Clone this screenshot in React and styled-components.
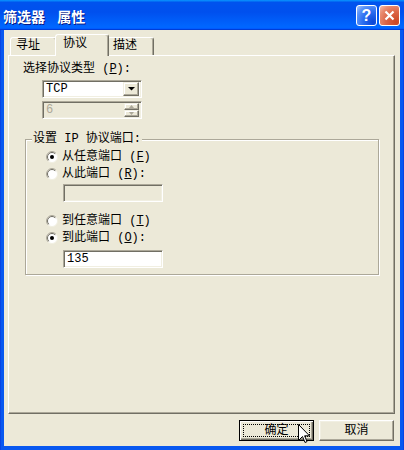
import React from 'react';
import styled, { createGlobalStyle } from 'styled-components';

const GlobalStyle = createGlobalStyle`
  html, body {
    margin: 0;
    padding: 0;
    background: #fff;
  }
  body {
    font-family: "Liberation Mono", "Noto Sans CJK SC", monospace;
    font-size: 12px;
    color: #000;
  }
`;

const Window = styled.div`
  width: 404px;
  height: 450px;
  box-sizing: border-box;
  display: flex;
  flex-direction: column;
  padding-bottom: 4px;
  background: linear-gradient(to right, #0831d9 0, #0858f0 1px, #0858f0 403px, #0831d9 404px);
`;

const TitleBar = styled.div`
  height: 30px;
  flex: none;
  display: flex;
  align-items: center;
  padding: 0 4px 0 3px;
  background: linear-gradient(180deg, #0997ff, #0053ee 8%, #0050ee 40%, #0066ff 88%, #0066ff 93%, #005bff 95%, #003dd7 96%, #003dd7);
`;

const Title = styled.div`
  flex: 1;
  color: #fff;
  font-family: "Noto Sans CJK SC", sans-serif;
  font-weight: bold;
  font-size: 14px;
  line-height: 16px;
  word-spacing: 9px;
  text-shadow: 1px 1px 0 #0a1883;
  margin-top: 1px;
`;

const Controls = styled.div`
  display: flex;
  gap: 2px;
  margin-top: 1px;
`;

const CaptionButton = styled.div`
  width: 21px;
  height: 21px;
  box-sizing: border-box;
  border: 1px solid #fff;
  border-radius: 3px;
  display: flex;
  align-items: center;
  justify-content: center;
  color: #fff;
  font-family: "Liberation Sans", sans-serif;
  font-weight: bold;
  font-size: 16px;
  background: ${({ kind }) =>
    kind === 'close'
      ? 'radial-gradient(circle at 85% 85%, #cc4623 0%, #dc6547 45%, #e88a6f 75%, #f4c0ae 100%)'
      : 'radial-gradient(circle at 85% 85%, #0a45d6 0%, #2a6df0 45%, #5b93f8 75%, #a9c6fb 100%)'};
`;

const Body = styled.div`
  flex: 1;
  margin: 0 4px;
  background: #ece9d8;
  display: flex;
  flex-direction: column;
  padding: 4px 5px 0 4px;
`;

const TabRow = styled.div`
  height: 21px;
  display: flex;
  align-items: flex-end;
  padding-left: 2px;
  position: relative;
  z-index: 1;
`;

const Tab = styled.div`
  box-sizing: border-box;
  width: ${({ w, active }) => (active ? w + 4 : w)}px;
  height: ${({ active }) => (active ? 22 : 18)}px;
  margin: ${({ active }) => (active ? '0 -2px -1px' : '0')};
  padding: ${({ active }) => (active ? '2px 0 0 7px' : '1px 0 0 5px')};
  position: relative;
  z-index: ${({ active }) => (active ? 2 : 1)};
  background: #ece9d8;
  border: 1px solid;
  border-bottom: none;
  border-color: #fff #716f64 transparent #fff;
  border-radius: 3px 3px 0 0;
  box-shadow: inset -1px 0 0 #aca899;
  line-height: 14px;
  white-space: nowrap;
`;

const Panel = styled.div`
  height: 359px;
  box-sizing: border-box;
  border: 1px solid;
  border-color: #fff #716f64 #716f64 #fff;
  box-shadow: inset -1px -1px 0 #aca899;
  padding: 6px 15px 0 14px;
  display: flex;
  flex-direction: column;
  align-items: flex-start;
`;

const Label = styled.div`
  line-height: 14px;
  height: 14px;
  white-space: nowrap;
`;

const Field = styled.div`
  box-sizing: border-box;
  width: 100px;
  height: 18px;
  margin: ${({ m }) => m || '0'};
  display: flex;
  align-items: center;
  padding: 2px;
  border: 1px solid;
  border-color: #aca899 #fff #fff #aca899;
  box-shadow: inset 1px 1px 0 #716f64, inset -1px -1px 0 #f1efe2;
  background: ${({ disabled }) => (disabled ? '#ece9d8' : '#fff')};
  color: ${({ disabled }) => (disabled ? '#aca899' : '#000')};
`;

const FieldText = styled.div`
  flex: 1;
  padding-left: 1px;
  line-height: 14px;
`;

const DropButton = styled.div`
  width: 16px;
  height: 14px;
  box-sizing: border-box;
  border: 1px solid;
  border-color: #f1efe2 #716f64 #716f64 #f1efe2;
  box-shadow: inset -1px -1px 0 #aca899, inset 1px 1px 0 #fff;
  background: #ece9d8;
  display: flex;
  align-items: center;
  justify-content: center;
`;

const SpinStack = styled.div`
  display: flex;
  flex-direction: column;
`;

const SpinButton = styled(DropButton)`
  width: 15px;
  height: 7px;
`;

const Group = styled.fieldset`
  margin: 13px 0 0 2px;
  padding: 0;
  min-inline-size: 0;
  width: 354px;
  box-sizing: border-box;
  border: 1px solid #aca899;
  box-shadow: 1px 1px 0 #fff, inset 1px 1px 0 #fff;
`;

const Legend = styled.legend`
  margin-left: 6px;
  padding: 0 1px;
  line-height: 14px;
  background: #ece9d8;
`;

const GroupBody = styled.div`
  padding: 3px 0 6px 20px;
  display: flex;
  flex-direction: column;
  align-items: flex-start;
`;

const RadioRow = styled.div`
  height: 16px;
  margin-top: ${({ gap }) => gap || 0}px;
  display: flex;
  align-items: center;
  gap: 4px;
  line-height: 14px;
  white-space: nowrap;
`;

const ButtonRow = styled.div`
  margin-top: 6px;
  padding-right: 1px;
  display: flex;
  justify-content: flex-end;
  gap: 5px;
  position: relative;
`;

const Button = styled.div`
  width: 75px;
  height: 21px;
  box-sizing: border-box;
  display: flex;
  align-items: center;
  justify-content: center;
  position: relative;
  background: #ece9d8;
  border: 1px solid;
  border-color: ${({ primary }) => (primary ? '#000' : '#fff #716f64 #716f64 #fff')};
  box-shadow: ${({ primary }) =>
    primary
      ? 'inset 1px 1px 0 #fff, inset -1px -1px 0 #716f64, inset -2px -2px 0 #aca899'
      : 'inset -1px -1px 0 #aca899, inset 1px 1px 0 #f1efe2'};
  line-height: 14px;

  &::after {
    content: '';
    display: ${({ primary }) => (primary ? 'block' : 'none')};
    position: absolute;
    inset: 3px;
    border: 1px dotted #000;
  }
`;

const Cursor = styled.svg`
  position: absolute;
  left: 290px;
  top: 4px;
  z-index: 3;
`;

const Radio = ({ checked }) => (
  <svg width="12" height="12" viewBox="0 0 12 12">
    <circle cx="6" cy="6" r="5.5" fill="#fff" stroke="#f1efe2" />
    <path d="M2.1 9.9 A5.5 5.5 0 0 1 9.9 2.1" fill="none" stroke="#aca899" />
    <path d="M2.8 9.2 A4.5 4.5 0 0 1 9.2 2.8" fill="none" stroke="#716f64" />
    {checked && <circle cx="6" cy="6" r="2" fill="#000" />}
  </svg>
);

const Arrow = ({ color = '#000', up }) => (
  <svg width="7" height="4" viewBox="0 0 7 4">
    <path d={up ? 'M0 4 L7 4 L3.5 0.5 Z' : 'M0 0 L7 0 L3.5 3.5 Z'} fill={color} />
  </svg>
);

const SmallArrow = ({ up }) => (
  <svg width="5" height="3" viewBox="0 0 5 3">
    <path d={up ? 'M0 3 L5 3 L2.5 0 Z' : 'M0 0 L5 0 L2.5 3 Z'} fill="#aca899" />
  </svg>
);

export default function App() {
  return (
    <>
      <GlobalStyle />
      <Window>
        <TitleBar>
          <Title>筛选器 属性</Title>
          <Controls>
            <CaptionButton kind="help">?</CaptionButton>
            <CaptionButton kind="close">
              <svg width="11" height="11" viewBox="0 0 11 11">
                <path d="M1.5 1.5 L9.5 9.5 M9.5 1.5 L1.5 9.5" stroke="#fff" strokeWidth="2.2" />
              </svg>
            </CaptionButton>
          </Controls>
        </TitleBar>
        <Body>
          <TabRow>
            <Tab w={47}>寻址</Tab>
            <Tab w={50} active>协议</Tab>
            <Tab w={47}>描述</Tab>
          </TabRow>
          <Panel>
            <Label>选择协议类型 (<u>P</u>):</Label>
            <Field m="4px 0 0 19px">
              <FieldText>TCP</FieldText>
              <DropButton>
                <Arrow />
              </DropButton>
            </Field>
            <Field m="3px 0 0 19px" disabled>
              <FieldText>6</FieldText>
              <SpinStack>
                <SpinButton>
                  <SmallArrow up />
                </SpinButton>
                <SpinButton>
                  <SmallArrow />
                </SpinButton>
              </SpinStack>
            </Field>
            <Group>
              <Legend>设置 IP 协议端口:</Legend>
              <GroupBody>
                <RadioRow>
                  <Radio checked />
                  <span>从任意端口 (<u>F</u>)</span>
                </RadioRow>
                <RadioRow gap={1}>
                  <Radio />
                  <span>从此端口 (<u>R</u>):</span>
                </RadioRow>
                <Field m="2px 0 0 17px" disabled />
                <RadioRow gap={11}>
                  <Radio />
                  <span>到任意端口 (<u>T</u>)</span>
                </RadioRow>
                <RadioRow gap={1}>
                  <Radio checked />
                  <span>到此端口 (<u>O</u>):</span>
                </RadioRow>
                <Field m="4px 0 0 17px">
                  <FieldText>135</FieldText>
                </Field>
              </GroupBody>
            </Group>
          </Panel>
          <ButtonRow>
            <Button primary>确定</Button>
            <Button>取消</Button>
            <Cursor width="12" height="20" viewBox="0 0 12 20">
              <path d="M0.5 0.5 L0.5 16.5 L4.5 12.5 L7 18.5 L9 17.6 L6.6 11.8 L11.5 11.8 Z" fill="#fff" stroke="#000" strokeWidth="1" />
            </Cursor>
          </ButtonRow>
        </Body>
      </Window>
    </>
  );
}
